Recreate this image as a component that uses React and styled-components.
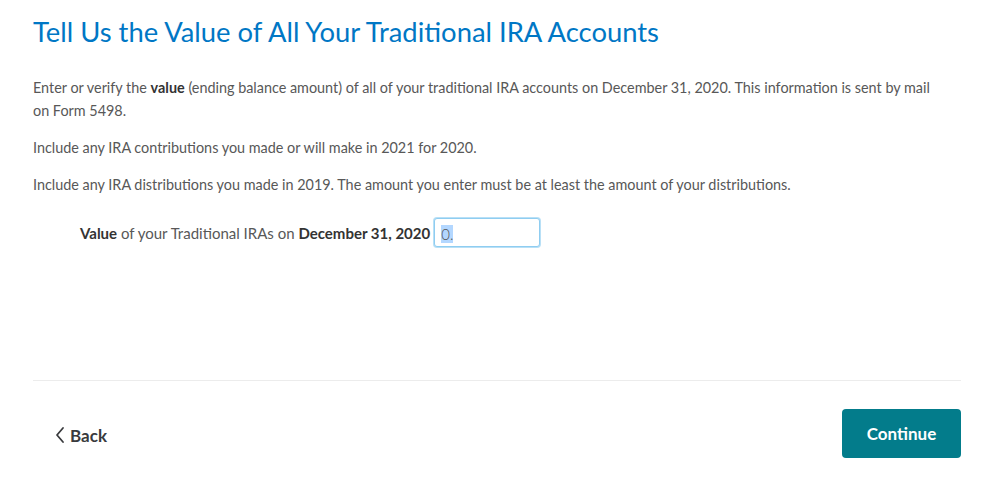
import React, { useEffect, useRef } from "react";
import styled, { createGlobalStyle } from "styled-components";

const GlobalStyle = createGlobalStyle`
  html, body {
    margin: 0;
    padding: 0;
    background: #ffffff;
  }
  body {
    font-family: Lato, "Noto Sans", "Liberation Sans", sans-serif;
    color: #4a4a4a;
  }
`;

const Page = styled.div`
  width: 999px;
  height: 479px;
  box-sizing: border-box;
  padding: 14px 38px 0 33px;
  display: flex;
  flex-direction: column;
`;

const Title = styled.h1`
  margin: 0;
  font-size: 27.4px;
  font-weight: 400;
  line-height: 36px;
  color: #0077c5;
`;

const Body = styled.div`
  margin-top: 26px;
  flex: 1;
`;

const Para = styled.p`
  max-width: 912px;
  margin: 0 0 14px;
  font-size: 14.4px;
  line-height: 23px;
  font-weight: 400;
  color: #585858;
`;

const Strong = styled.b`
  font-weight: 700;
  color: #333;
`;

const FieldRow = styled.div`
  display: flex;
  align-items: center;
  gap: 4px;
  margin-top: 22px;
  padding-left: 47px;
`;

const Label = styled.label`
  font-size: 15px;
  color: #585858;
`;

const Input = styled.input`
  box-sizing: border-box;
  width: 106px;
  height: 29px;
  border: 1px solid #8fcdf1;
  border-radius: 3px;
  box-shadow: 0 0 0 1px #b9e0f6;
  padding: 3px 6px 0;
  font-family: Lato, "Noto Sans", sans-serif;
  font-size: 15px;
  font-weight: 300;
  color: #555;
  outline: none;
  &::selection {
    background: #b3d7ff;
  }
`;

const Divider = styled.hr`
  margin: 0;
  border: 0;
  border-top: 1px solid #ececec;
`;

const Footer = styled.div`
  height: 98px;
  display: flex;
  align-items: center;
  justify-content: space-between;
`;

const BackLink = styled.a`
  display: flex;
  align-items: center;
  gap: 4px;
  margin-left: 21px;
  margin-top: 10px;
  font-size: 17px;
  font-weight: 700;
  color: #393a3d;
  text-decoration: none;
  cursor: pointer;
`;

const ContinueButton = styled.button`
  width: 119px;
  height: 49px;
  margin-top: 6px;
  border: 0;
  border-radius: 4px;
  background: #037c8b;
  color: #fff;
  font-family: Lato, "Noto Sans", sans-serif;
  font-size: 17px;
  font-weight: 700;
  cursor: pointer;
`;

export default function App() {
  const inputRef = useRef(null);

  useEffect(() => {
    if (inputRef.current) {
      inputRef.current.focus();
      inputRef.current.select();
    }
  }, []);

  return (
    <>
      <GlobalStyle />
      <Page>
        <Title>Tell Us the Value of All Your Traditional IRA Accounts</Title>
        <Body>
          <Para>
            Enter or verify the <Strong>value</Strong> (ending balance amount) of all of your traditional IRA accounts on December 31, 2020. This information is sent by mail on Form 5498.
          </Para>
          <Para>Include any IRA contributions you made or will make in 2021 for 2020.</Para>
          <Para>
            Include any IRA distributions you made in 2019. The amount you enter must be at least the amount of your distributions.
          </Para>
          <FieldRow>
            <Label htmlFor="ira-value">
              <Strong>Value</Strong> of your Traditional IRAs on <Strong>December 31, 2020</Strong>
            </Label>
            <Input id="ira-value" ref={inputRef} defaultValue="0." />
          </FieldRow>
        </Body>
        <Divider />
        <Footer>
          <BackLink>
            <svg width="12" height="18" viewBox="0 0 12 18" fill="none">
              <path d="M9 2 L3 9 L9 16" stroke="#393a3d" strokeWidth="1.8" strokeLinecap="round" strokeLinejoin="round" />
            </svg>
            Back
          </BackLink>
          <ContinueButton>Continue</ContinueButton>
        </Footer>
      </Page>
    </>
  );
}
